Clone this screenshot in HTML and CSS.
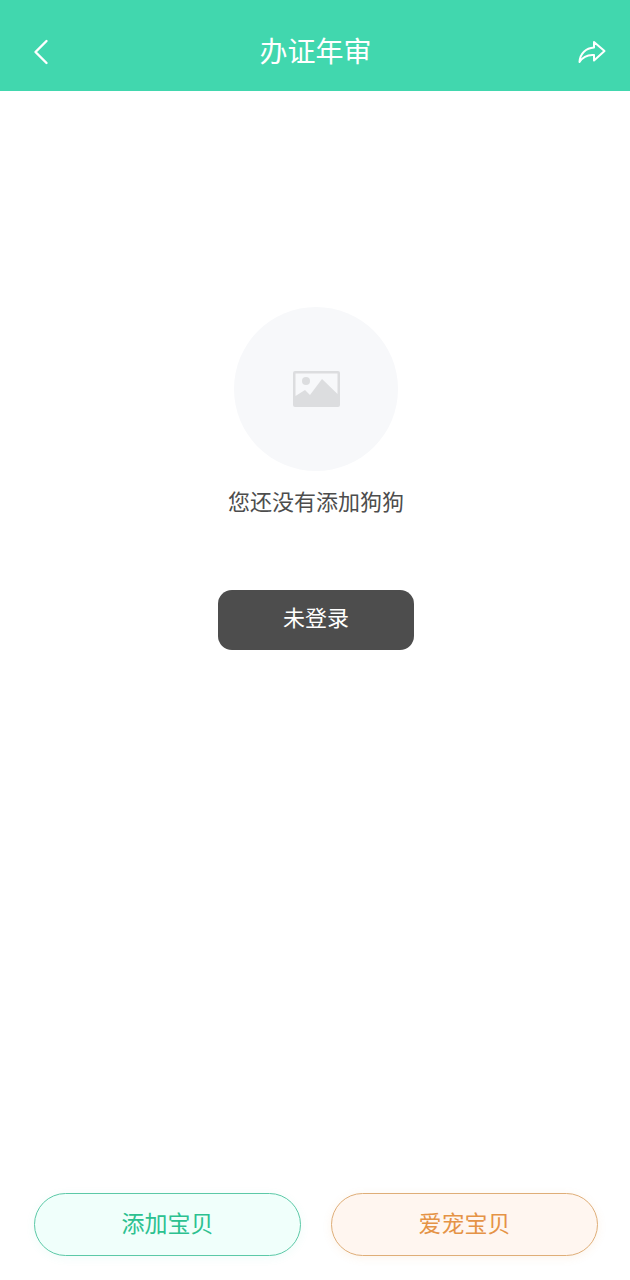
FILE: index.html
```html
<!DOCTYPE html>
<html lang="zh-CN">
<head>
<meta charset="UTF-8">
<meta name="viewport" content="width=device-width, initial-scale=1.0">
<title>办证年审</title>
<link rel="stylesheet" href="styles.css">
</head>
<body>
<div class="page">
    <header class="header">
        <svg class="back-icon" width="16" height="26" viewBox="0 0 16 26">
            <path d="M13.5 2 L2.5 13 L13.5 24" fill="none" stroke="#fff" stroke-width="2.4" stroke-linecap="round" stroke-linejoin="round"/>
        </svg>
        <h1 class="title">办证年审</h1>
        <svg class="share-icon" width="28" height="24" viewBox="0 0 28 24">
            <path d="M16 2 L26.5 11 L16 20.5 L16 15 C10 14.5 5 16.5 1.5 22 C2 13.5 8 8 16 7.5 Z" fill="none" stroke="#fff" stroke-width="2" stroke-linejoin="round" stroke-linecap="round"/>
        </svg>
    </header>

    <main class="empty">
        <div class="empty-circle">
            <svg width="47" height="36" viewBox="0 0 47 36">
                <rect width="47" height="36" rx="2" fill="#dcdddf"/>
                <path d="M2.500 2.500 H44.500 V23 L29 8 L17 24 L12 19 L2.500 25 Z" fill="#f7f8fa"/>
                <circle cx="13" cy="10" r="4" fill="#dcdddf"/>
            </svg>
        </div>
        <p class="empty-text">您还没有添加狗狗</p>
        <button class="login-btn" type="button">未登录</button>
    </main>

    <footer class="actions">
        <button class="action-btn action-add" type="button">添加宝贝</button>
        <button class="action-btn action-pet" type="button">爱宠宝贝</button>
    </footer>
</div>
</body>
</html>
```

FILE: styles.css
```css
* {
    box-sizing: border-box;
}
body {
    margin: 0;
    padding: 0;
    background-color: #fff;
    font-family: "Noto Sans CJK SC", "Noto Sans", sans-serif;
}
.page {
    display: flex;
    flex-direction: column;
    height: 1280px;
}
.header {
    display: flex;
    align-items: center;
    justify-content: space-between;
    height: 91px;
    padding: 12px 24px 0 33px;
    background-color: #41d7ae;
}
.title {
    margin: 0;
    padding: 0 0 4px 4px;
    font-size: 28px;
    font-weight: 400;
    color: #fff;
}
.empty {
    display: flex;
    flex-direction: column;
    align-items: center;
    padding: 216px 0 0 2px;
}
.empty-circle {
    display: flex;
    align-items: center;
    justify-content: center;
    width: 164px;
    height: 164px;
    border-radius: 50%;
    background-color: #f7f8fa;
}
.empty-text {
    margin: 13px 0 0;
    font-size: 22px;
    line-height: 32px;
    color: #4d4d4d;
}
.login-btn {
    width: 196px;
    height: 60px;
    margin-top: 74px;
    padding: 0 0 8px;
    border: none;
    border-radius: 14px;
    background-color: #4d4d4d;
    color: #fff;
    font-family: inherit;
    font-size: 22px;
}
.actions {
    display: flex;
    justify-content: space-between;
    margin-top: auto;
    padding: 0 32px 24px 34px;
}
.action-btn {
    width: 267px;
    height: 63px;
    padding: 0 0 6px;
    border-radius: 32px;
    font-family: inherit;
    font-size: 23px;
}
.action-add {
    border: 1px solid #5cc9a7;
    background-color: #f0fffb;
    color: #2cc190;
    box-shadow: 0 2px 10px rgba(65, 215, 174, 0.08);
}
.action-pet {
    border: 1px solid #dfae78;
    background-color: #fff6f0;
    color: #e59346;
    box-shadow: 0 2px 10px rgba(229, 147, 70, 0.1);
}
```
